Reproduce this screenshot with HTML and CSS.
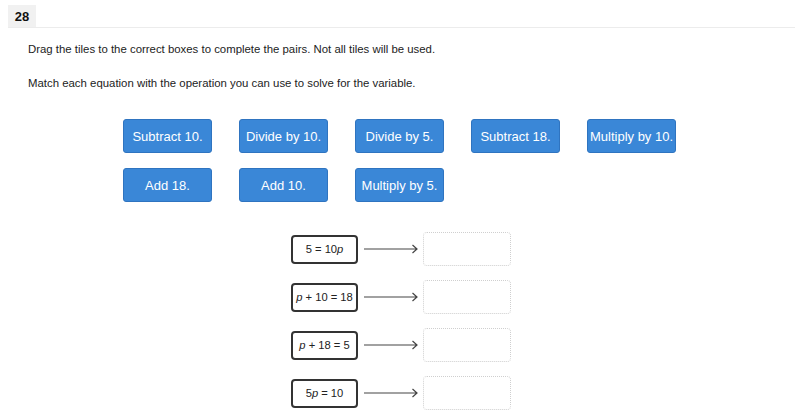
FILE: index.html
```html
<!DOCTYPE html>
<html>
<head>
<meta charset="utf-8">
<link rel="stylesheet" href="styles.css">
</head>
<body>
<div class="header"><span class="qnum">28</span></div>
<div class="content">
  <p class="instr first">Drag the tiles to the correct boxes to complete the pairs. Not all tiles will be used.</p>
  <p class="instr second">Match each equation with the operation you can use to solve for the variable.</p>
  <div class="tiles">
    <div class="tile">Subtract 10.</div>
    <div class="tile">Divide by 10.</div>
    <div class="tile">Divide by 5.</div>
    <div class="tile">Subtract 18.</div>
    <div class="tile">Multiply by 10.</div>
    <div class="tile">Add 18.</div>
    <div class="tile">Add 10.</div>
    <div class="tile">Multiply by 5.</div>
  </div>
  <div class="pairs">
    <div class="pair">
      <div class="eq"><span>5 = 10<i>p</i></span></div>
      <svg class="arrow" width="54" height="10" viewBox="0 0 54 10"><path d="M0 5H53M48.5 1L53 5L48.5 9" fill="none" stroke="#444" stroke-width="1.2"/></svg>
      <div class="slot"></div>
    </div>
    <div class="pair">
      <div class="eq"><span><i>p</i> + 10 = 18</span></div>
      <svg class="arrow" width="54" height="10" viewBox="0 0 54 10"><path d="M0 5H53M48.5 1L53 5L48.5 9" fill="none" stroke="#444" stroke-width="1.2"/></svg>
      <div class="slot"></div>
    </div>
    <div class="pair">
      <div class="eq"><span><i>p</i> + 18 = 5</span></div>
      <svg class="arrow" width="54" height="10" viewBox="0 0 54 10"><path d="M0 5H53M48.5 1L53 5L48.5 9" fill="none" stroke="#444" stroke-width="1.2"/></svg>
      <div class="slot"></div>
    </div>
    <div class="pair">
      <div class="eq"><span>5<i>p</i> = 10</span></div>
      <svg class="arrow" width="54" height="10" viewBox="0 0 54 10"><path d="M0 5H53M48.5 1L53 5L48.5 9" fill="none" stroke="#444" stroke-width="1.2"/></svg>
      <div class="slot"></div>
    </div>
  </div>
</div>
</body>
</html>
```

FILE: styles.css
```css
html, body {
  margin: 0;
  padding: 0;
  background: #fff;
  font-family: "Liberation Sans", Arial, sans-serif;
  color: #222;
}
.header {
  margin: 5px 5px 0 8px;
  height: 22px;
  border-bottom: 1px solid #ececec;
  display: flex;
}
.qnum {
  display: flex;
  align-items: center;
  justify-content: center;
  width: 28px;
  height: 22px;
  background: #f1f1f1;
  font-weight: bold;
  font-size: 13px;
  color: #111;
}
.content {
  padding-left: 28px;
}
.instr {
  margin: 0;
  font-size: 11.4px;
  line-height: 14px;
}
.instr.first { margin-top: 14px; }
.instr.second { margin-top: 20px; }
.tiles {
  margin: 29px 0 0 95px;
  display: grid;
  grid-template-columns: repeat(5, 89px);
  column-gap: 27px;
  row-gap: 15px;
}
.tile {
  height: 34px;
  box-sizing: border-box;
  background: #3a87d7;
  border: 1px solid #2f74c0;
  border-radius: 3px;
  color: #fff;
  font-size: 13px;
  display: flex;
  align-items: center;
  justify-content: center;
  white-space: nowrap;
}
.pairs {
  margin: 30px 0 0 263px;
  display: flex;
  flex-direction: column;
  gap: 14px;
}
.pair {
  display: flex;
  align-items: center;
  height: 34px;
}
.eq {
  width: 67px;
  height: 29px;
  box-sizing: border-box;
  border: 2px solid #333;
  border-radius: 4px;
  font-size: 11.2px;
  display: flex;
  align-items: center;
  justify-content: center;
  white-space: nowrap;
  color: #222;
}
.arrow {
  margin-left: 6px;
  margin-right: 5px;
}
.slot {
  width: 88px;
  height: 34px;
  box-sizing: border-box;
  border: 1px dotted #cfcfcf;
  border-radius: 4px;
}
```
